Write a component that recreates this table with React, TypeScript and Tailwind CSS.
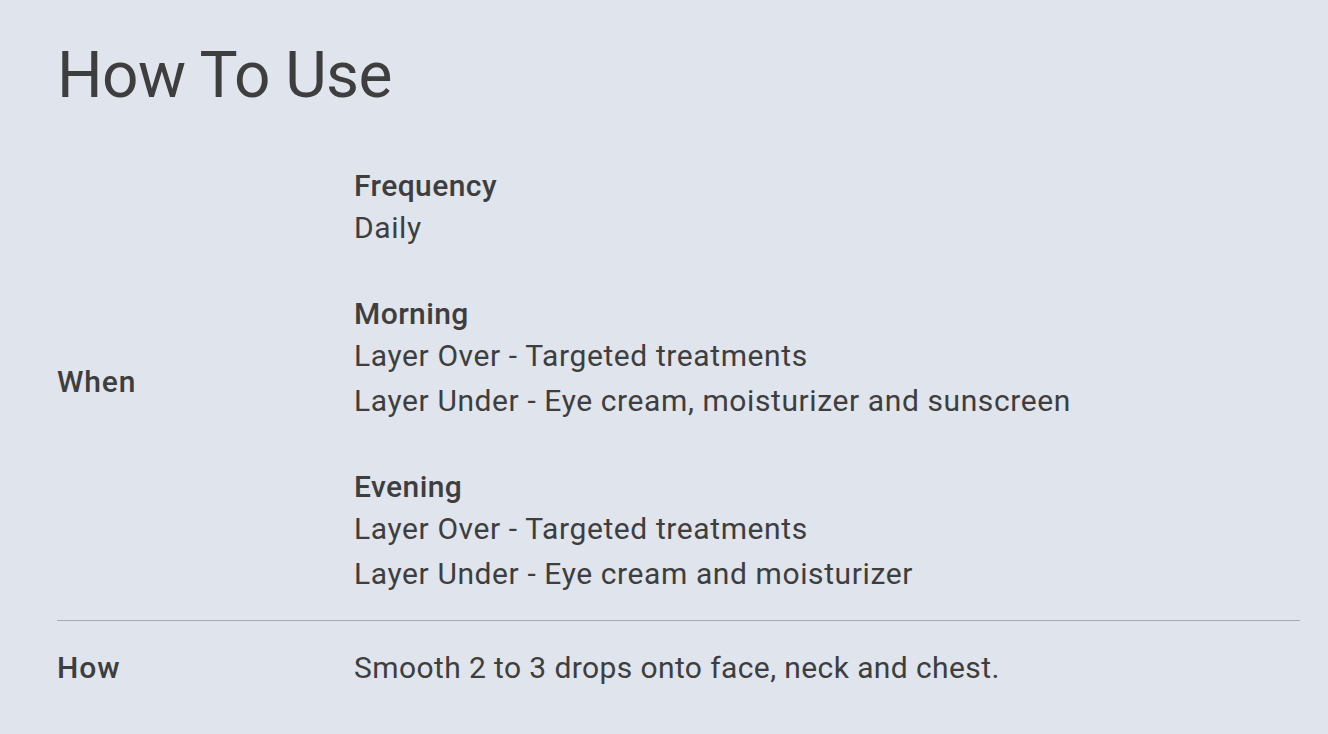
import React from 'react';

type Block = { title: string; lines: string[] };

const whenBlocks: Block[] = [
  { title: 'Frequency', lines: ['Daily'] },
  {
    title: 'Morning',
    lines: ['Layer Over - Targeted treatments', 'Layer Under - Eye cream, moisturizer and sunscreen'],
  },
  {
    title: 'Evening',
    lines: ['Layer Over - Targeted treatments', 'Layer Under - Eye cream and moisturizer'],
  },
];

const medium = { fontFamily: '"Roboto Medium", Roboto, "Liberation Sans", sans-serif' };

export default function App() {
  return (
    <div
      className="min-h-screen w-full bg-[#e0e4ed] text-[#3e3e3e] pl-[57px] pr-[28px]"
      style={{ fontFamily: 'Roboto, "Liberation Sans", sans-serif' }}
    >
      <h1 className="pt-[38px] text-[64px] leading-[76px] font-normal tracking-[-0.6px]">How To Use</h1>

      <div className="mt-[28px]">
        <div className="flex items-center border-b border-[#a8aaae] py-6">
          <div className="w-[297px] shrink-0 text-[30px] leading-[45px] font-medium tracking-[0.9px]" style={medium}>
            When
          </div>
          <div className="flex flex-col gap-[44px] text-[30px] tracking-[0.6px]">
            {whenBlocks.map((block) => (
              <div key={block.title}>
                <div className="font-medium leading-[39px] tracking-[0.4px]" style={medium}>
                  {block.title}
                </div>
                {block.lines.map((line) => (
                  <div key={line} className="leading-[45px]">
                    {line}
                  </div>
                ))}
              </div>
            ))}
          </div>
        </div>

        <div className="flex items-center py-6">
          <div className="w-[297px] shrink-0 text-[30px] leading-[45px] font-medium tracking-[0.9px]" style={medium}>
            How
          </div>
          <div className="text-[30px] leading-[45px] tracking-[0.4px]">Smooth 2 to 3 drops onto face, neck and chest.</div>
        </div>
      </div>
    </div>
  );
}
